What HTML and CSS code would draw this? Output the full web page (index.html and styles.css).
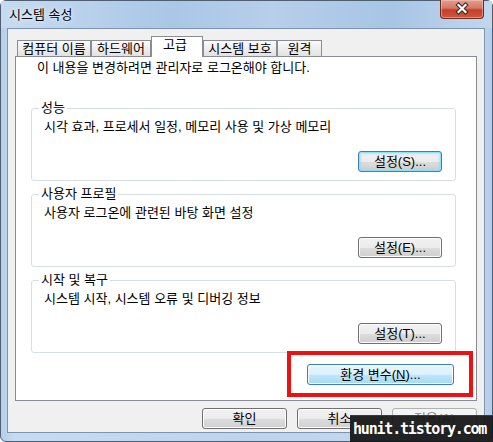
FILE: index.html
```html
<!DOCTYPE html>
<html>
	<head>
		<meta charset="UTF-8">
		<title>시스템 속성</title>
		<link rel="stylesheet" href="styles.css">
	</head>
	<body>
		<div class="window">
			<div class="titlebar">
				<span class="title">시스템 속성</span>
				<div class="close">
					<svg width="44" height="19" viewBox="0 0 44 19">
						<path d="M18.5 6 L25.5 13 M25.5 6 L18.5 13" stroke="#3a2420" stroke-width="4.2" stroke-linecap="square" fill="none"/>
						<path d="M18.5 6 L25.5 13 M25.5 6 L18.5 13" stroke="#ffffff" stroke-width="2.2" stroke-linecap="square" fill="none"/>
					</svg>
				</div>
			</div>
			<div class="client">
				<div class="tabs">
					<div class="tab t1">컴퓨터 이름</div>
					<div class="tab t2">하드웨어</div>
					<div class="tab active">고급</div>
					<div class="tab t4">시스템 보호</div>
					<div class="tab t5">원격</div>
				</div>
				<div class="panel">
					<p class="notice">이 내용을 변경하려면 관리자로 로그온해야 합니다.</p>
					<fieldset class="group first">
						<legend>성능</legend>
						<p class="desc">시각 효과, 프로세서 일정, 메모리 사용 및 가상 메모리</p>
						<div class="actions"><button class="btn small focus">설정(S)...</button></div>
					</fieldset>
					<fieldset class="group">
						<legend>사용자 프로필</legend>
						<p class="desc">사용자 로그온에 관련된 바탕 화면 설정</p>
						<div class="actions"><button class="btn small">설정(E)...</button></div>
					</fieldset>
					<fieldset class="group">
						<legend>시작 및 복구</legend>
						<p class="desc">시스템 시작, 시스템 오류 및 디버깅 정보</p>
						<div class="actions"><button class="btn small">설정(T)...</button></div>
					</fieldset>
					<div class="env-row">
						<div class="env-wrap">
							<span class="highlight"></span>
							<button class="btn env hot">환경 변수(<u>N</u>)...</button>
						</div>
					</div>
				</div>
				<div class="footer">
					<button class="btn wide">확인</button>
					<button class="btn wide">취소</button>
					<button class="btn wide" disabled>적용(A)</button>
				</div>
			</div>
			<div class="watermark">hunit.tistory.com</div>
		</div>
	</body>
</html>
```
FILE: styles.css
```css
* {
	margin: 0;
	padding: 0;
	box-sizing: border-box;
}
body {
	font: 13px/14px "Liberation Sans", "Noto Sans CJK KR", sans-serif;
	color: #000;
	background: #fff;
}
.window {
	position: relative;
	width: 493px;
	height: 442px;
	border: 1px solid #4f5e73;
	border-radius: 6px;
	padding: 0 7px 8px 6px;
	display: flex;
	flex-direction: column;
	background: linear-gradient(to right, #b4cfea, #c6dcf2 3%, #bcd4ed 50%, #c4daf1 97%, #b2cde9);
}
.titlebar {
	height: 27px;
	display: flex;
	justify-content: space-between;
	align-items: center;
	background: linear-gradient(to right, #c6dbf1, #aac7e6 35%, #b6cfea 55%, #a8c5e5 80%, #c1d7ee);
	margin: 0 -7px 0 -6px;
	padding: 0 8px 0 7px;
}
.title {
	padding-left: 1px;
	color: #000;
	text-shadow: 0 0 6px #eaf3fb, 0 0 3px #eaf3fb;
}
.close {
	align-self: flex-start;
	margin-top: -1px;
	width: 44px;
	height: 19px;
	border: 1px solid #6c2a22;
	border-top: none;
	border-radius: 0 0 4px 4px;
	background: linear-gradient(#e2a08f 0%, #d47764 45%, #c2402c 55%, #d0563a 100%);
	box-shadow: inset 0 0 0 1px rgba(255, 200, 190, 0.5);
}
.close svg {
	display: block;
	margin: -1px 0 0 -1px;
}
.client {
	height: 405px;
	border: 1px solid #7f93ad;
	background: #f0f0f0;
	display: flex;
	flex-direction: column;
}
.tabs {
	display: flex;
	align-items: flex-end;
	height: 20px;
	margin: 7px 0 0 9px;
}
.tab {
	height: 16px;
	border: 1px solid #898c95;
	border-bottom: none;
	background: linear-gradient(#fbfbfb, #e2e2e2);
	line-height: 15px;
	text-align: center;
	white-space: nowrap;
}
.t1 {
	width: 74px;
}
.t2 {
	width: 60px;
}
.t4 {
	width: 74px;
}
.t5 {
	width: 45px;
}
.tab.active {
	position: relative;
	z-index: 1;
	width: 52px;
	height: 21px;
	margin-bottom: -1px;
	background: #fff;
	padding-right: 4px;
}
.panel {
	margin-left: 7px;
	width: 462px;
	height: 345px;
	border: 1px solid #898c95;
	background: #fff;
	padding: 4px 0 0 15px;
}
.notice {
	padding-left: 6px;
}
.group {
	width: 425px;
	margin-top: 6px;
	padding: 0 0 8px;
	border: 1px solid #d5dfe5;
	border-radius: 3px;
	min-width: 0;
}
.group.first {
	margin-top: 26px;
}
.group legend {
	margin-left: 7px;
	padding: 0 2px;
	line-height: 14px;
}
.desc {
	margin: 5px 0 0 12px;
}
.actions {
	display: flex;
	justify-content: flex-end;
	margin-top: 17px;
	padding-right: 13px;
}
.btn {
	height: 21px;
	border: 1px solid #707070;
	border-radius: 3px;
	background: linear-gradient(#f2f2f2 0%, #ebebeb 50%, #dddddd 51%, #cfcfcf 100%);
	box-shadow: inset 0 0 0 1px #fcfcfc;
	font: 13px/17px "Liberation Sans", "Noto Sans CJK KR", sans-serif;
	color: #000;
	text-align: center;
}
.btn.small {
	width: 84px;
}
.btn.wide {
	width: 85px;
}
.btn.focus {
	border-color: #3c7fb1;
	box-shadow: inset 0 0 0 1px #8fe0fb, inset 0 0 2px 2px rgba(120, 215, 250, 0.45);
}
.btn.hot {
	border-color: #3c7fb1;
	background: linear-gradient(#eaf6fd 0%, #d9f0fc 50%, #bee6fd 51%, #a7d9f5 100%);
}
.btn:disabled {
	border-color: #adb2b5;
	background: #f4f4f4;
	box-shadow: none;
	color: #838383;
}
.btn u {
	text-underline-offset: 1px;
}
.env-row {
	display: flex;
	justify-content: flex-end;
	margin-top: 11px;
	padding-right: 22px;
}
.env-wrap {
	position: relative;
}
.btn.env {
	width: 147px;
}
.highlight {
	position: absolute;
	top: -13px;
	right: -19px;
	bottom: -12px;
	left: -20px;
	border: 4px solid #ee1111;
}
.footer {
	display: flex;
	justify-content: flex-end;
	gap: 10px;
	margin-top: 7px;
	padding-right: 7px;
}
.watermark {
	position: absolute;
	right: -1px;
	bottom: -1px;
	width: 143px;
	height: 27px;
	padding-left: 3px;
	background: rgba(22, 22, 22, 0.94);
	border-top: 1px solid #3a3a3a;
	color: #fff;
	font: bold 15px/26px "DejaVu Sans Mono", monospace;
	letter-spacing: -1.2px;
	white-space: nowrap;
}
```
